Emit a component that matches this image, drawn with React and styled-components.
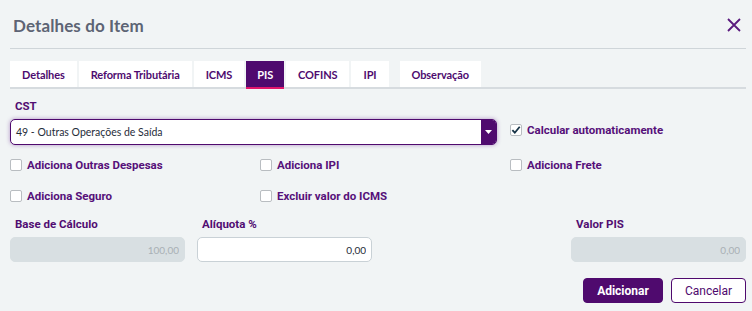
import { useState } from 'react';
import styled, { createGlobalStyle } from 'styled-components';

const GlobalStyle = createGlobalStyle`
  html, body {
    margin: 0;
    padding: 0;
    background: #f1f4f5;
  }
  * { box-sizing: border-box; }
`;

const Modal = styled.div`
  width: 752px;
  height: 311px;
  background: #f1f4f5;
  padding: 0 6px 0 10px;
  font-family: 'Lato', 'Noto Sans', sans-serif;
`;

const Header = styled.div`
  height: 49px;
  display: flex;
  align-items: center;
  justify-content: space-between;
  border-bottom: 1px solid #cfd5d9;
  padding: 2px 0 0 3px;
`;

const Title = styled.h1`
  margin: 0;
  font-size: 17px;
  font-weight: 700;
  color: #5d6474;
  letter-spacing: 0.1px;
`;

const CloseButton = styled.button`
  border: 0;
  background: transparent;
  padding: 0;
  width: 20px;
  height: 20px;
  display: flex;
  align-items: center;
  justify-content: center;
  cursor: pointer;
  margin-right: 2px;
`;

const TabBar = styled.div`
  margin-top: 12px;
  display: flex;
  gap: 2px;
  border-bottom: 2px solid #d6dbdf;
`;

const Tab = styled.button`
  height: 28px;
  border: 0;
  margin: 0 0 -2px 0;
  margin-left: ${(p) => (p.$gap ? '9px' : '0')};
  padding: 0 ${(p) => p.$pad || 12}px;
  font-family: 'Lato', sans-serif;
  font-size: 11px;
  font-weight: 700;
  letter-spacing: -0.1px;
  color: ${(p) => (p.$active ? '#fff' : '#4e0b6f')};
  background: ${(p) => (p.$active ? '#4f0a6e' : '#fff')};
  border-bottom: 2px solid ${(p) => (p.$active ? '#e2166b' : '#d6dbdf')};
  cursor: pointer;
`;

const Body = styled.div`
  padding-top: 10px;
`;

const Label = styled.div`
  font-family: 'Roboto', 'Liberation Sans', sans-serif;
  font-size: 11.5px;
  font-weight: 700;
  color: #510d72;
  padding-left: 5px;
  height: 14px;
  line-height: 14px;
`;

const TopGrid = styled.div`
  display: grid;
  grid-template-columns: 250px 250px 1fr;
`;

const SelectWrap = styled.div`
  grid-column: span 2;
  margin-top: 6px;
  width: 487px;
  height: 26px;
  display: flex;
  border: 1px solid #4f0a6e;
  border-radius: 5px;
  box-shadow: 0 0 4px rgba(102, 30, 140, 0.45);
  overflow: hidden;
  background: #fff;
`;

const SelectText = styled.div`
  flex: 1;
  display: flex;
  align-items: center;
  padding-left: 5px;
  font-family: 'Lato', sans-serif;
  font-size: 10.5px;
  color: #1f2d3a;
`;

const SelectArrow = styled.div`
  width: 15px;
  background: #4f0a6e;
  display: flex;
  align-items: center;
  justify-content: center;
`;

const CheckRow = styled.label`
  display: flex;
  align-items: center;
  gap: 5px;
  height: ${(p) => p.$h || 32}px;
  padding-top: ${(p) => p.$top || 0}px;
  cursor: pointer;
`;

const Box = styled.span`
  width: 12px;
  height: 12px;
  border: 1px solid #b9bdc1;
  border-radius: 2px;
  background: #fff;
  display: flex;
  align-items: center;
  justify-content: center;
  flex: none;
`;

const CheckText = styled.span`
  font-family: 'Roboto', 'Liberation Sans', sans-serif;
  font-size: 11.5px;
  font-weight: 700;
  color: #561079;
`;

const FieldsGrid = styled.div`
  display: grid;
  grid-template-columns: repeat(4, 175px);
  column-gap: 12px;
  margin-top: 4px;
`;

const Field = styled.div`
  display: flex;
  flex-direction: column;
  gap: 6px;
`;

const Input = styled.input`
  height: 25px;
  width: 175px;
  border: 1px solid ${(p) => (p.disabled ? '#d8dfe2' : '#c9d1d6')};
  border-radius: 5px;
  background: ${(p) => (p.disabled ? '#d8dfe2' : '#fff')};
  text-align: right;
  padding: 0 5px;
  font-family: 'Lato', sans-serif;
  font-size: 10px;
  color: ${(p) => (p.disabled ? '#a9b0b5' : '#1f2d3a')};
  outline: none;
`;

const Footer = styled.div`
  display: flex;
  justify-content: flex-end;
  gap: 8px;
  margin-top: 16px;
`;

const Button = styled.button`
  height: 25px;
  width: ${(p) => p.$w}px;
  border-radius: 4px;
  border: 1px solid #4f0a6e;
  background: ${(p) => (p.$primary ? '#4f0a6e' : '#fff')};
  color: ${(p) => (p.$primary ? '#fff' : '#4f0a6e')};
  font-family: 'Roboto', 'Liberation Sans', sans-serif;
  font-size: 12px;
  font-weight: ${(p) => (p.$primary ? 700 : 400)};
  cursor: pointer;
`;

const tabs = ['Detalhes', 'Reforma Tributária', 'ICMS', 'PIS', 'COFINS', 'IPI', 'Observação'];

function Check({ label, checked, onToggle, h, top }) {
  return (
    <CheckRow $h={h} $top={top} onClick={onToggle}>
      <Box>
        {checked && (
          <svg width="11" height="10" viewBox="0 0 11 10">
            <path d="M1.5 5.2 L4.2 8 L9.6 1.4" fill="none" stroke="#173447" strokeWidth="2" />
          </svg>
        )}
      </Box>
      <CheckText>{label}</CheckText>
    </CheckRow>
  );
}

export default function App() {
  const [active, setActive] = useState('PIS');
  const [checks, setChecks] = useState({ auto: true });
  const toggle = (k) => setChecks((c) => ({ ...c, [k]: !c[k] }));

  return (
    <>
      <GlobalStyle />
      <Modal>
        <Header>
          <Title>Detalhes do Item</Title>
          <CloseButton aria-label="Fechar">
            <svg width="14" height="14" viewBox="0 0 14 14">
              <path d="M1 1 L13 13 M13 1 L1 13" stroke="#5a1a7e" strokeWidth="1.8" />
            </svg>
          </CloseButton>
        </Header>

        <TabBar>
          {tabs.map((t) => (
            <Tab
              key={t}
              $active={active === t}
              $gap={t === 'Observação'}
              $pad={t === 'PIS' ? 11 : 12}
              onClick={() => setActive(t)}
            >
              {t}
            </Tab>
          ))}
        </TabBar>

        <Body>
          <Label>CST</Label>
          <TopGrid>
            <SelectWrap>
              <SelectText>49 - Outras Operações de Saída</SelectText>
              <SelectArrow>
                <svg width="7" height="4" viewBox="0 0 7 4">
                  <path d="M0 0 L7 0 L3.5 4 Z" fill="#fff" />
                </svg>
              </SelectArrow>
            </SelectWrap>
            <Check label="Calcular automaticamente" checked={checks.auto} onToggle={() => toggle('auto')} h={26} top={8} />
            <Check label="Adiciona Outras Despesas" checked={checks.out} onToggle={() => toggle('out')} h={34} top={6} />
            <Check label="Adiciona IPI" checked={checks.ipi} onToggle={() => toggle('ipi')} h={34} top={6} />
            <Check label="Adiciona Frete" checked={checks.frete} onToggle={() => toggle('frete')} h={34} top={6} />
            <Check label="Adiciona Seguro" checked={checks.seg} onToggle={() => toggle('seg')} h={34} />
            <Check label="Excluir valor do ICMS" checked={checks.icms} onToggle={() => toggle('icms')} h={34} />
          </TopGrid>

          <FieldsGrid>
            <Field>
              <Label>Base de Cálculo</Label>
              <Input disabled value="100,00" readOnly />
            </Field>
            <Field>
              <Label>Alíquota %</Label>
              <Input defaultValue="0,00" />
            </Field>
            <div />
            <Field>
              <Label>Valor PIS</Label>
              <Input disabled value="0,00" readOnly />
            </Field>
          </FieldsGrid>

          <Footer>
            <Button $primary $w={80}>Adicionar</Button>
            <Button $w={75}>Cancelar</Button>
          </Footer>
        </Body>
      </Modal>
    </>
  );
}
